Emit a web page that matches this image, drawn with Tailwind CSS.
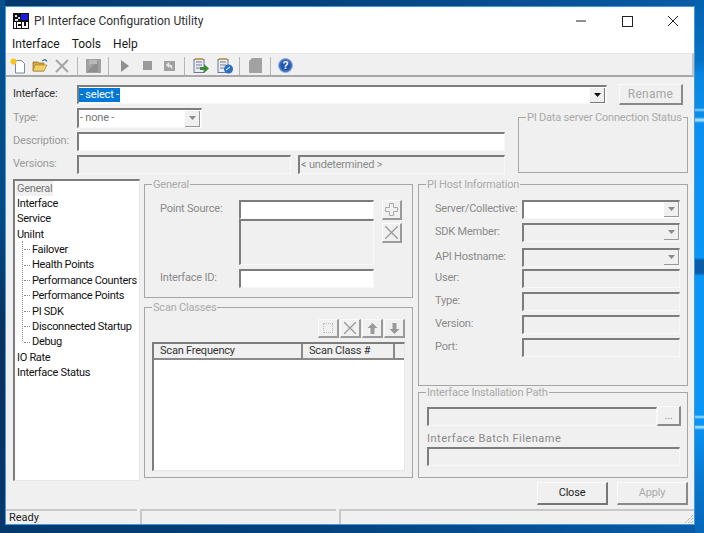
<!doctype html>
<html>
<head>
<meta charset="UTF-8">
<script src="https://cdn.jsdelivr.net/npm/@tailwindcss/browser@4"></script>
<title>PI Interface Configuration Utility</title>
</head>
<body class="m-0 w-[704px] h-[533px] overflow-hidden relative font-['Roboto',sans-serif] text-[11px] text-[#222] bg-[linear-gradient(90deg,#04386c_0%,#04427c_45%,#0a5ca8_100%)]">

<!-- desktop edges -->
<div class="absolute left-0 top-0 w-[5px] h-[533px] bg-[linear-gradient(180deg,#02528f_0%,#034a86_40%,#0a2f5a_62%,#06386c_100%)]"></div>
<div class="absolute right-0 top-0 w-[9px] h-[533px] bg-[linear-gradient(180deg,#0462ae_0px,#0672c4_60px,#0a86e0_75px,#0a8ee8_108px,#8fd0f5_110px,#0a8ee8_112px,#0a8ee8_117px,#c0e8fb_120px,#0a90f0_123px,#0a96f5_258px,#0a5ca6_260px,#0a5ca6_273px,#0a96f5_276px,#0a96f5_415px,#a8e0fa_417px,#0a96f5_419px,#0a96f5_425px,#c0e8fb_427px,#0a90f0_430px,#0878cf_480px,#0666b4_533px)]"></div>

<!-- window -->
<div class="absolute left-[5px] top-[6px] w-[690px] h-[519px] flex flex-col bg-[#f0f0f0] border border-[#3f9be0]">

    <!-- Title bar -->
    <div class="h-[27px] shrink-0 bg-white flex items-center pl-[7px] text-[12px]">
        <svg class="w-[16px] h-[16px]" viewBox="0 0 16 16">
            <rect width="16" height="16" fill="#111"/>
            <rect x="8" y="1" width="7" height="6" fill="#1a1ae0"/>
            <rect x="2" y="2" width="2" height="2" fill="#ddd"/><rect x="5" y="4" width="2" height="2" fill="#ccc"/><rect x="2" y="6" width="3" height="2" fill="#ddd"/>
            <rect x="1" y="9" width="2" height="6" fill="#fff"/><rect x="4" y="9" width="4" height="6" fill="#fff"/><rect x="5" y="11" width="3" height="2" fill="#111"/>
            <rect x="9" y="9" width="2" height="6" fill="#fff"/><rect x="13" y="9" width="2" height="6" fill="#fff"/><rect x="9" y="13" width="6" height="2" fill="#fff"/>
        </svg>
        <span class="ml-[5px] text-[#333]">PI Interface Configuration Utility</span>
        <div class="ml-auto flex items-center text-black">
            <svg class="w-[46px] h-[20px]" viewBox="0 0 46 20"><path d="M20 10h10" stroke="#222" fill="none"/></svg>
            <svg class="w-[46px] h-[20px]" viewBox="0 0 46 20"><rect x="20.500" y="5.500" width="10" height="10" stroke="#222" fill="none"/></svg>
            <svg class="w-[46px] h-[20px]" viewBox="0 0 46 20"><path d="M20 5l10 10M30 5l-10 10" stroke="#222" fill="none"/></svg>
        </div>
    </div>

    <!-- Menu -->
    <div class="h-[19px] shrink-0 bg-white flex items-center pl-[6px] pt-[1px] gap-[12px] text-[12px] text-[#1a1a1a]">
        <span>Interface</span><span>Tools</span><span>Help</span>
    </div>

    <!-- Toolbar -->
    <div class="h-[24px] shrink-0 border-b-2 border-[#a9a9a9] border-t border-t-[#e6e6e6] border-r-2 border-r-[#c4c4c4] flex items-center pl-[4px] pt-[2px]">
        <!-- new -->
        <svg class="w-[16px] h-[16px]" viewBox="0 0 16 16"><path d="M5.500 2.500h6l3 3v9.500h-9z" fill="#fff" stroke="#7a8aa5"/><circle cx="3.500" cy="3.500" r="3" fill="#f5c518"/></svg>
        <!-- open -->
        <svg class="w-[16px] h-[16px] ml-[6px]" viewBox="0 0 16 16"><path d="M1 4h5l1 1h5v8H1z" fill="#d9a93a" stroke="#8a6a20" stroke-width=".7"/><path d="M3 7h12l-3 6H1z" fill="#f3cf6b" stroke="#a98428" stroke-width=".7"/><path d="M10 3l3-1.500 2 2" stroke="#4a73a8" fill="none" stroke-width="1.300"/></svg>
        <!-- delete -->
        <svg class="w-[14px] h-[14px] ml-[7px]" viewBox="0 0 14 14"><path d="M1 1l12 12M13 1L1 13" stroke="#a6a6a6" stroke-width="2" fill="none"/></svg>
        <div class="w-[1px] h-[18px] bg-[#b5b5b5] ml-[8px]"></div>
        <!-- save -->
        <svg class="w-[15px] h-[14px] ml-[8px]" viewBox="0 0 15 14"><rect width="15" height="14" fill="#a0a0a0"/><path d="M1 13l11-11v11z" fill="#8e8e8e"/><path d="M3 1h8v4H5L3 7z" fill="#b8b8b8"/></svg>
        <div class="w-[1px] h-[18px] bg-[#b5b5b5] ml-[7px]"></div>
        <!-- play -->
        <svg class="w-[8px] h-[12px] ml-[12px]" viewBox="0 0 8 12"><path d="M0 0l8 6-8 6z" fill="#8f8f8f"/></svg>
        <!-- stop -->
        <div class="w-[9px] h-[9px] bg-[#9a9a9a] ml-[14px]"></div>
        <!-- restart -->
        <svg class="w-[11px] h-[10px] ml-[12px]" viewBox="0 0 11 10"><rect width="11" height="10" fill="#a0a0a0"/><path d="M2 4l3-2.500v5zM4 4h3l1 1v3" stroke="#e6e6e6" fill="#e6e6e6" stroke-width=".6"/></svg>
        <div class="w-[1px] h-[18px] bg-[#b5b5b5] ml-[9px]"></div>
        <!-- doc arrow -->
        <svg class="w-[16px] h-[16px] ml-[8px]" viewBox="0 0 16 16"><rect x="1" y="1.500" width="10" height="13" fill="#e8ecf4" stroke="#6c7a96"/><path d="M3 4h6M3 7h6M3 10h4" stroke="#778"/><path d="M2 0h8v2H2z" fill="#c9a25a"/><path d="M7 9h4V6l5 4.500-5 4.500v-3H7z" fill="#3f8a3a"/></svg>
        <!-- doc help -->
        <svg class="w-[16px] h-[16px] ml-[8px]" viewBox="0 0 16 16"><rect x="1" y="1.500" width="10" height="13" fill="#e8ecf4" stroke="#6c7a96"/><path d="M3 4h6M3 7h6M3 10h4" stroke="#778"/><path d="M2 0h8v2H2z" fill="#c9a25a"/><circle cx="11.500" cy="11" r="4.500" fill="#2a6fc0"/><path d="M9 12l4-3" stroke="#fff"/></svg>
        <div class="w-[1px] h-[18px] bg-[#b5b5b5] ml-[6px]"></div>
        <!-- page -->
        <svg class="w-[13px] h-[15px] ml-[9px]" viewBox="0 0 13 15"><path d="M3 0h10v15H0V3z" fill="#a2a2a2"/></svg>
        <div class="w-[1px] h-[18px] bg-[#b5b5b5] ml-[8px]"></div>
        <!-- help -->
        <svg class="w-[15px] h-[15px] ml-[7px]" viewBox="0 0 15 15"><circle cx="7.500" cy="7.500" r="7" fill="#3d6fc4" stroke="#9db6e2"/><circle cx="7.500" cy="7.500" r="5" fill="#2456b0"/><text x="7.500" y="11" text-anchor="middle" font-size="10" font-weight="bold" fill="#fff" font-family="Liberation Sans">?</text></svg>
    </div>

    <!-- Body -->
    <div class="flex-1 flex flex-col pl-[7px] pr-[6px] tracking-[-0.2px]">
        <!-- Interface row -->
        <div class="flex items-center mt-[7px] h-[21px]">
            <span class="w-[64px] text-[#333]">Interface:</span>
            <div class="w-[530px] h-[19px] flex border-t-2 border-l-2 border-[#7d7d7d] border-b border-r border-b-[#f8f8f8] border-r-[#f8f8f8] bg-white items-center">
                <span class="bg-[#0078d7] text-white leading-[13px] px-[1px] h-[14px]">- select -</span>
                <span class="ml-auto w-[15px] h-[15px] bg-[#f0f0f0] border-r border-b border-[#777] flex items-center justify-center mr-[1px]"><svg class="w-[7px] h-[4px]" viewBox="0 0 7 4"><path d="M0 0h7L3.500 4z" fill="#111"/></svg></span>
            </div>
            <div class="w-[64px] h-[21px] ml-[12px] border border-t-[#fafafa] border-l-[#fafafa] border-r-2 border-b-2 border-r-[#8a8a8a] border-b-[#8a8a8a] flex items-center justify-center text-[12px] tracking-[0.3px] text-[#a6a6a6]">Rename</div>
        </div>

        <!-- Upper form + status group -->
        <div class="flex mt-[3px]">
            <div class="w-[492px] flex flex-col gap-[4px]">
                <div class="flex items-center h-[20px]">
                    <span class="w-[64px] text-[#9a9a9a]">Type:</span>
                    <div class="w-[125px] h-[20px] flex border-t-2 border-l-2 border-[#7d7d7d] border-b border-r border-b-[#f8f8f8] border-r-[#f8f8f8] bg-white items-center pl-[1px] text-[#777]">
                        <span>- none -</span>
                        <span class="ml-auto w-[15px] h-[16px] bg-[#f0f0f0] border-r border-b border-[#999] flex items-center justify-center mr-[1px]"><svg class="w-[7px] h-[4px]" viewBox="0 0 7 4"><path d="M0 0h7L3.500 4z" fill="#8a8a8a"/></svg></span>
                    </div>
                </div>
                <div class="flex items-center h-[19px]">
                    <span class="w-[64px] text-[#9a9a9a]">Description:</span>
                    <div class="w-[428px] h-[19px] border-t-2 border-l-2 border-[#7d7d7d] border-b border-r border-b-[#f8f8f8] border-r-[#f8f8f8] bg-white"></div>
                </div>
                <div class="flex items-center h-[19px]">
                    <span class="w-[64px] text-[#9a9a9a]">Versions:</span>
                    <div class="w-[214px] h-[19px] border-t-2 border-l-2 border-[#7d7d7d] border-b border-r border-b-[#f8f8f8] border-r-[#f8f8f8]"></div>
                    <div class="w-[207px] h-[19px] ml-[7px] border-t-2 border-l-2 border-[#7d7d7d] border-b border-r border-b-[#f8f8f8] border-r-[#f8f8f8] pl-[1px] text-[#8a8a8a] leading-[16px]">&lt; undetermined &gt;</div>
                </div>
            </div>
            <div class="relative w-[171px] h-[56px] mt-[9px] ml-[13px] border border-[#a6a6a6]">
                <span class="absolute left-[7px] top-[-7px] bg-[#f0f0f0] px-[1px] whitespace-nowrap text-[#aaa] leading-[13px]">PI Data server Connection Status</span>
            </div>
        </div>

        <!-- Middle -->
        <div class="flex mt-[5px]">
            <!-- Tree -->
            <div class="relative w-[127px] h-[302px] bg-white border-t-2 border-l-2 border-[#7d7d7d] border-b border-r border-b-[#e8e8e8] border-r-[#e8e8e8] pl-[1px] leading-[15.400px] text-[#111] tracking-[-0.3px]">
                <div class="absolute left-[7px] top-[60px] h-[100px] w-0 border-l border-dotted border-[#888]"></div>
                <div class="h-[15.400px] -mt-[0.5px]"><span class="bg-[#f0f0f0] text-[#777] px-[1px] inline-block">General</span></div>
                <div class="h-[15.400px] pl-[1px]">Interface</div>
                <div class="h-[15.400px] pl-[1px]">Service</div>
                <div class="h-[15.400px] pl-[1px]">UniInt</div>
                <div class="ml-[8px]">
                    <div class="h-[15.400px] whitespace-nowrap flex items-center"><span class="w-[6px] shrink-0 mr-[2px] border-t border-dotted border-[#888]"></span>Failover</div>
                    <div class="h-[15.400px] whitespace-nowrap flex items-center"><span class="w-[6px] shrink-0 mr-[2px] border-t border-dotted border-[#888]"></span>Health Points</div>
                    <div class="h-[15.400px] whitespace-nowrap flex items-center"><span class="w-[6px] shrink-0 mr-[2px] border-t border-dotted border-[#888]"></span>Performance Counters</div>
                    <div class="h-[15.400px] whitespace-nowrap flex items-center"><span class="w-[6px] shrink-0 mr-[2px] border-t border-dotted border-[#888]"></span>Performance Points</div>
                    <div class="h-[15.400px] whitespace-nowrap flex items-center"><span class="w-[6px] shrink-0 mr-[2px] border-t border-dotted border-[#888]"></span>PI SDK</div>
                    <div class="h-[15.400px] whitespace-nowrap flex items-center"><span class="w-[6px] shrink-0 mr-[2px] border-t border-dotted border-[#888]"></span>Disconnected Startup</div>
                    <div class="h-[15.400px] whitespace-nowrap flex items-center"><span class="w-[6px] shrink-0 mr-[2px] border-t border-dotted border-[#888]"></span>Debug</div>
                </div>
                <div class="h-[15.400px] pl-[1px]">IO Rate</div>
                <div class="h-[15.400px] pl-[1px]">Interface Status</div>
            </div>

            <!-- Center column -->
            <div class="w-[269px] ml-[4px] pt-[5px] flex flex-col gap-[9px]">
                <div class="relative h-[114px] border border-[#a6a6a6] pl-[15px] pt-[15px]">
                    <span class="absolute left-[7px] top-[-7px] bg-[#f0f0f0] px-[1px] text-[#aaa] leading-[13px]">General</span>
                    <div class="flex">
                        <span class="w-[80px] text-[#8a8a8a] leading-[17px]">Point Source:</span>
                        <div class="w-[135px] flex flex-col -ml-[1px]">
                            <div class="h-[19px] bg-white border-t-2 border-l-2 border-[#7d7d7d] border-b border-r border-b-[#f8f8f8] border-r-[#f8f8f8]"></div>
                            <div class="h-[46px] border-t-2 border-l-2 border-[#7d7d7d] border-b border-r border-b-[#f8f8f8] border-r-[#f8f8f8]"></div>
                        </div>
                        <div class="ml-[8px] flex flex-col gap-[3px]">
                            <div class="w-[20px] h-[20px] border border-t-[#fafafa] border-l-[#fafafa] border-r-2 border-b-2 border-r-[#9a9a9a] border-b-[#9a9a9a] flex items-center justify-center"><svg class="w-[13px] h-[13px]" viewBox="0 0 13 13"><path d="M4.500.5h4v4h4v4h-4v4h-4v-4h-4v-4h4z" fill="none" stroke="#aaa"/></svg></div>
                            <div class="w-[20px] h-[20px] border border-t-[#fafafa] border-l-[#fafafa] border-r-2 border-b-2 border-r-[#9a9a9a] border-b-[#9a9a9a] flex items-center justify-center"><svg class="w-[13px] h-[13px]" viewBox="0 0 13 13"><path d="M0 0l13 13M13 0L0 13" stroke="#999" stroke-width="1.300" fill="none"/></svg></div>
                        </div>
                    </div>
                    <div class="flex mt-[4px]">
                        <span class="w-[80px] text-[#8a8a8a] leading-[17px]">Interface ID:</span>
                        <div class="w-[135px] h-[19px] -ml-[1px] bg-white border-t-2 border-l-2 border-[#7d7d7d] border-b border-r border-b-[#f8f8f8] border-r-[#f8f8f8]"></div>
                    </div>
                </div>

                <div class="relative h-[171px] border border-[#a6a6a6] pl-[7px] pr-[7px] pt-[11px]">
                    <span class="absolute left-[7px] top-[-7px] bg-[#f0f0f0] px-[1px] text-[#aaa] leading-[13px]">Scan Classes</span>
                    <div class="flex justify-end gap-[1px]">
                        <div class="w-[21px] h-[19px] border border-t-[#fafafa] border-l-[#fafafa] border-r-2 border-b-2 border-r-[#9a9a9a] border-b-[#9a9a9a] flex items-center justify-center"><div class="w-[10px] h-[10px] border border-dotted border-[#bbb]"></div></div>
                        <div class="w-[21px] h-[19px] border border-t-[#fafafa] border-l-[#fafafa] border-r-2 border-b-2 border-r-[#9a9a9a] border-b-[#9a9a9a] flex items-center justify-center"><svg class="w-[12px] h-[12px]" viewBox="0 0 12 12"><path d="M0 0l12 12M12 0L0 12" stroke="#999" stroke-width="1.300" fill="none"/></svg></div>
                        <div class="w-[21px] h-[19px] border border-t-[#fafafa] border-l-[#fafafa] border-r-2 border-b-2 border-r-[#9a9a9a] border-b-[#9a9a9a] flex items-center justify-center"><svg class="w-[11px] h-[11px]" viewBox="0 0 11 11"><path d="M5.500 0l5 5H7.500v6h-4V5H.5z" fill="#9a9a9a"/></svg></div>
                        <div class="w-[21px] h-[19px] border border-t-[#fafafa] border-l-[#fafafa] border-r-2 border-b-2 border-r-[#9a9a9a] border-b-[#9a9a9a] flex items-center justify-center"><svg class="w-[11px] h-[11px]" viewBox="0 0 11 11"><path d="M5.500 11l5-5H7.500V0h-4v6H.5z" fill="#9a9a9a"/></svg></div>
                    </div>
                    <div class="mt-[4px] h-[129px] bg-white border-t-2 border-l-2 border-[#7d7d7d] border-b border-r border-b-[#e8e8e8] border-r-[#e8e8e8] flex flex-col">
                        <div class="h-[16px] bg-[#f0f0f0] flex border-b-2 border-[#8a8a8a] leading-[14px] text-[#333]">
                            <span class="w-[149px] pl-[6px] border-r-2 border-[#8a8a8a]">Scan Frequency</span>
                            <span class="w-[92px] pl-[6px] border-r-2 border-[#8a8a8a]">Scan Class #</span>
                        </div>
                    </div>
                </div>
            </div>

            <!-- Right column -->
            <div class="w-[270px] ml-[5px] pt-[5px] flex flex-col gap-[6px]">
                <div class="relative h-[202px] border border-[#a6a6a6] pl-[16px] pt-[15px] flex flex-col text-[#8a8a8a]">
                    <span class="absolute left-[7px] top-[-7px] bg-[#f0f0f0] px-[1px] text-[#aaa] leading-[13px]">PI Host Information</span>
                    <div class="flex items-center h-[19px]">
                        <span class="w-[87px] whitespace-nowrap">Server/Collective:</span>
                        <div class="w-[158px] h-[19px] flex justify-end border-t-2 border-l-2 border-[#7d7d7d] border-b border-r border-b-[#f8f8f8] border-r-[#f8f8f8] bg-white"><span class="w-[15px] h-[15px] bg-[#f0f0f0] border-r border-b border-[#999] flex items-center justify-center"><svg class="w-[7px] h-[4px]" viewBox="0 0 7 4"><path d="M0 0h7L3.500 4z" fill="#8a8a8a"/></svg></span></div>
                    </div>
                    <div class="flex items-center h-[19px] mt-[4px]">
                        <span class="w-[87px]">SDK Member:</span>
                        <div class="w-[158px] h-[19px] flex justify-end border-t-2 border-l-2 border-[#7d7d7d] border-b border-r border-b-[#f8f8f8] border-r-[#f8f8f8]"><span class="w-[15px] h-[15px] bg-[#f0f0f0] border-r border-b border-[#999] flex items-center justify-center"><svg class="w-[7px] h-[4px]" viewBox="0 0 7 4"><path d="M0 0h7L3.500 4z" fill="#8a8a8a"/></svg></span></div>
                    </div>
                    <div class="flex items-center h-[19px] mt-[6px]">
                        <span class="w-[87px]">API Hostname:</span>
                        <div class="w-[158px] h-[19px] flex justify-end border-t-2 border-l-2 border-[#7d7d7d] border-b border-r border-b-[#f8f8f8] border-r-[#f8f8f8]"><span class="w-[15px] h-[15px] bg-[#f0f0f0] border-r border-b border-[#999] flex items-center justify-center"><svg class="w-[7px] h-[4px]" viewBox="0 0 7 4"><path d="M0 0h7L3.500 4z" fill="#8a8a8a"/></svg></span></div>
                    </div>
                    <div class="flex items-center h-[19px] mt-[2px]">
                        <span class="w-[87px]">User:</span>
                        <div class="w-[158px] h-[19px] border-t-2 border-l-2 border-[#7d7d7d] border-b border-r border-b-[#f8f8f8] border-r-[#f8f8f8]"></div>
                    </div>
                    <div class="flex items-center h-[19px] mt-[4px]">
                        <span class="w-[87px]">Type:</span>
                        <div class="w-[158px] h-[19px] border-t-2 border-l-2 border-[#7d7d7d] border-b border-r border-b-[#f8f8f8] border-r-[#f8f8f8]"></div>
                    </div>
                    <div class="flex items-center h-[19px] mt-[4px]">
                        <span class="w-[87px]">Version:</span>
                        <div class="w-[158px] h-[19px] border-t-2 border-l-2 border-[#7d7d7d] border-b border-r border-b-[#f8f8f8] border-r-[#f8f8f8]"></div>
                    </div>
                    <div class="flex items-center h-[19px] mt-[4px]">
                        <span class="w-[87px]">Port:</span>
                        <div class="w-[158px] h-[19px] border-t-2 border-l-2 border-[#7d7d7d] border-b border-r border-b-[#f8f8f8] border-r-[#f8f8f8]"></div>
                    </div>
                </div>
                <div class="relative h-[86px] border border-[#a6a6a6] pl-[8px] pt-[13px] text-[#8a8a8a]">
                    <span class="absolute left-[7px] top-[-7px] bg-[#f0f0f0] px-[1px] text-[#aaa] leading-[13px]">Interface Installation Path</span>
                    <div class="flex items-center">
                        <div class="w-[230px] h-[19px] border-t-2 border-l-2 border-[#7d7d7d] border-b border-r border-b-[#f8f8f8] border-r-[#f8f8f8]"></div>
                        <div class="w-[24px] h-[20px] border border-t-[#fafafa] border-l-[#fafafa] border-r-2 border-b-2 border-r-[#8a8a8a] border-b-[#8a8a8a] flex items-center justify-center leading-[14px]">...</div>
                    </div>
                    <div class="mt-[6px] leading-[14px] tracking-[0.5px]">Interface Batch Filename</div>
                    <div class="w-[253px] h-[19px] mt-[1px] border-t-2 border-l-2 border-[#7d7d7d] border-b border-r border-b-[#f8f8f8] border-r-[#f8f8f8]"></div>
                </div>
            </div>
        </div>

        <!-- Buttons -->
        <div class="flex justify-end gap-[9px] mt-[1px]">
            <div class="w-[71px] h-[23px] border border-t-[#fafafa] border-l-[#fafafa] border-r-2 border-b-2 border-r-[#777] border-b-[#777] flex items-center justify-center text-[#222]">Close</div>
            <div class="w-[71px] h-[23px] border border-t-[#fafafa] border-l-[#fafafa] border-r-2 border-b-2 border-r-[#8a8a8a] border-b-[#8a8a8a] flex items-center justify-center text-[#aaa]">Apply</div>
        </div>
    </div>

    <!-- Status bar -->
    <div class="relative h-[15px] shrink-0 flex gap-[3px] text-[#222] leading-[13px]">
        <div class="w-[131px] border-t-2 border-[#c8c8c8] pl-[3px]">Ready</div>
        <div class="w-[196px] border-t-2 border-l-2 border-[#c8c8c8]"></div>
        <div class="flex-1 border-t-2 border-l-2 border-[#c8c8c8]"></div>
        <svg class="absolute right-0 bottom-0 w-[11px] h-[11px]" viewBox="0 0 11 11"><path d="M10 2L2 10M10 5l-5 5M10 8l-2 2" stroke="#999" stroke-dasharray="1 1" fill="none"/></svg>
    </div>
</div>
</body>
</html>
